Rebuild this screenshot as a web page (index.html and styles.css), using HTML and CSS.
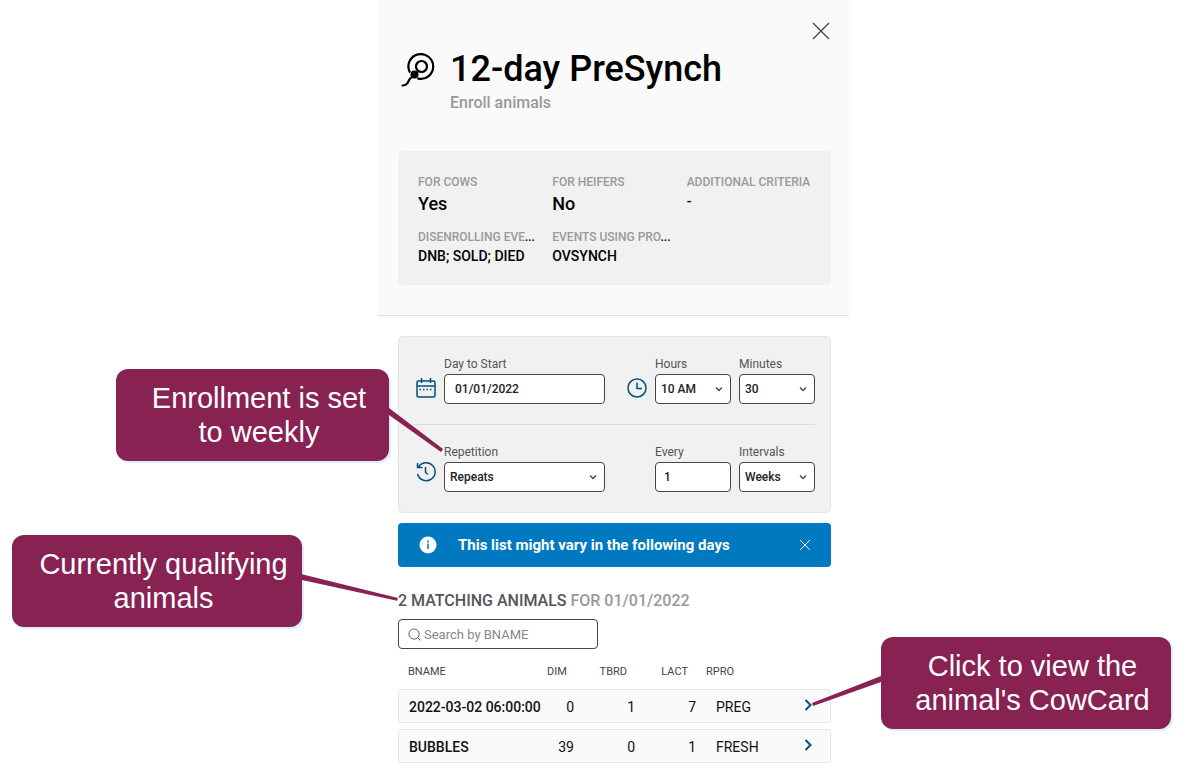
FILE: index.html
```html
<!DOCTYPE html>
<html lang="en">
<head>
  <meta charset="UTF-8">
  <meta name="viewport" content="width=device-width, initial-scale=1">
  <title>12-day PreSynch</title>
  <link rel="stylesheet" href="styles.css">
</head>
<body>

  <main class="panel">
    <header class="panel-header">
      <button type="button" class="close" aria-label="Close">
        <svg width="18" height="18" viewBox="0 0 18 18"><path d="M1 1l16 16M17 1L1 17"/></svg>
      </button>

      <div class="title-row">
        <svg class="title-icon" width="36" height="36" viewBox="0 0 36 36">
          <path d="M9.600 18.8A12.400 12.400 0 1 1 18.200 25.6"/>
          <circle cx="21.500" cy="13.500" r="5.500"/>
          <circle class="filled" cx="14.500" cy="21.500" r="4"/>
          <path d="M13 23.500c-5 2-3.500 4-5.500 6.500-1 1.500-2.500 2.500-5 2.500"/>
        </svg>
        <div>
          <h1>12-day PreSynch</h1>
          <p class="subtitle">Enroll animals</p>
        </div>
      </div>

      <dl class="summary">
        <div>
          <dt>FOR COWS</dt>
          <dd class="big">Yes</dd>
        </div>
        <div>
          <dt>FOR HEIFERS</dt>
          <dd class="big">No</dd>
        </div>
        <div>
          <dt>ADDITIONAL CRITERIA</dt>
          <dd>-</dd>
        </div>
        <div>
          <dt>DISENROLLING EVE<span class="more">...</span></dt>
          <dd>DNB; SOLD; DIED</dd>
        </div>
        <div>
          <dt>EVENTS USING PRO<span class="more">...</span></dt>
          <dd>OVSYNCH</dd>
        </div>
      </dl>
    </header>

    <div class="panel-body">
      <form class="schedule">
        <div class="schedule-row">
          <svg class="field-icon" width="20" height="20" viewBox="0 0 20 20">
            <rect x="1" y="3" width="18" height="16" rx="1.500"/>
            <path d="M1 8h18M5.500 0v5M14.500 0v5"/>
            <path d="M3.500 11.500h13" stroke-dasharray="1.500 2"/>
          </svg>
          <div class="field">
            <label for="start">Day to Start</label>
            <input type="text" id="start" class="date" value="01/01/2022">
          </div>
          <svg class="field-icon" width="20" height="20" viewBox="0 0 20 20">
            <circle cx="10" cy="10" r="9"/>
            <path d="M10 4.500v6h5"/>
          </svg>
          <div class="field">
            <label for="hours">Hours</label>
            <div class="select">
              <select id="hours"><option>10 AM</option></select>
              <svg width="8" height="6" viewBox="0 0 8 6"><path d="M1 1.500l3 3 3-3"/></svg>
            </div>
          </div>
          <div class="field">
            <label for="minutes">Minutes</label>
            <div class="select">
              <select id="minutes"><option>30</option></select>
              <svg width="8" height="6" viewBox="0 0 8 6"><path d="M1 1.500l3 3 3-3"/></svg>
            </div>
          </div>
        </div>

        <div class="schedule-row">
          <svg class="field-icon history" width="20" height="20" viewBox="0 0 20 20">
            <path d="M2.500 5A9 9 0 1 1 1.500 12M1.500 1v4.500H6.500M9.500 5v5.500l2.500 2"/>
          </svg>
          <div class="field">
            <label for="repetition">Repetition</label>
            <div class="select">
              <select id="repetition"><option>Repeats</option></select>
              <svg width="8" height="6" viewBox="0 0 8 6"><path d="M1 1.500l3 3 3-3"/></svg>
            </div>
          </div>
          <div class="field every">
            <label for="every">Every</label>
            <input type="text" id="every" value="1">
          </div>
          <div class="field">
            <label for="intervals">Intervals</label>
            <div class="select">
              <select id="intervals"><option>Weeks</option></select>
              <svg width="8" height="6" viewBox="0 0 8 6"><path d="M1 1.500l3 3 3-3"/></svg>
            </div>
          </div>
        </div>
      </form>

      <div class="notice">
        <svg width="18" height="18" viewBox="0 0 18 18">
          <circle cx="9" cy="9" r="8.500" fill="#fff"/>
          <path d="M9 4.500v2M9 7.500v5.500" stroke="#0079c1" stroke-width="1.500"/>
        </svg>
        <p>This list might vary in the following days</p>
        <button type="button" aria-label="Dismiss">
          <svg width="12" height="12" viewBox="0 0 12 12"><path d="M1 1l10 10M11 1L1 11"/></svg>
        </button>
      </div>

      <h2>2 MATCHING ANIMALS <span>FOR 01/01/2022</span></h2>

      <div class="search">
        <svg width="13" height="13" viewBox="0 0 14 14"><circle cx="6.500" cy="6.500" r="5.500"/><path d="M10.500 10.500l3 3"/></svg>
        <input type="text" aria-label="Search by BNAME" placeholder="Search by BNAME">
      </div>

      <table class="animals">
        <colgroup>
          <col class="col-name">
          <col class="col-dim">
          <col class="col-num">
          <col class="col-num">
          <col>
          <col class="col-open">
        </colgroup>
        <thead>
          <tr>
            <th>BNAME</th>
            <th class="num">DIM</th>
            <th class="num">TBRD</th>
            <th class="num">LACT</th>
            <th class="rpro">RPRO</th>
            <th></th>
          </tr>
        </thead>
        <tbody>
          <tr>
            <td class="name">2022-03-02 06:00:00</td>
            <td class="num">0</td>
            <td class="num">1</td>
            <td class="num">7</td>
            <td>PREG</td>
            <td class="open"><button type="button" aria-label="Open CowCard"><svg width="8" height="12" viewBox="0 0 8 12"><path d="M1.500 1l5 5-5 5"/></svg></button></td>
          </tr>
          <tr>
            <td class="name">BUBBLES</td>
            <td class="num">39</td>
            <td class="num">0</td>
            <td class="num">1</td>
            <td>FRESH</td>
            <td class="open"><button type="button" aria-label="Open CowCard"><svg width="8" height="12" viewBox="0 0 8 12"><path d="M1.500 1l5 5-5 5"/></svg></button></td>
          </tr>
        </tbody>
      </table>
    </div>

    <!-- Callouts over the panel -->
    <div class="callout callout-weekly">
      Enrollment is set<br>to weekly
      <svg width="54" height="46" viewBox="0 0 54 46"><path d="M0 1l54 41-2 3L0 8z"/></svg>
    </div>
    <div class="callout callout-animals">
      Currently qualifying<br>animals
      <svg width="96" height="28" viewBox="0 0 97 28"><path d="M0 0l97 24-1 3L0 6z"/></svg>
    </div>
    <div class="callout callout-card">
      Click to view the<br>animal's CowCard
      <svg width="69" height="32" viewBox="0 0 69 32"><path d="M69 1L0 28l1 3 68-24z"/></svg>
    </div>
  </main>

</body>
</html>
```
FILE: styles.css
```css
* {
  box-sizing: border-box;
}

body {
  display: grid;
  grid-template-columns: minmax(0, 378fr) minmax(0, 471px) minmax(0, 339fr);
  margin: 0;
  background: #fff;
  color: #000;
  font-family: Roboto, "Liberation Sans", sans-serif;
}

h1, h2, p, dl, dd {
  margin: 0;
}

svg {
  display: block;
  fill: none;
}

button {
  padding: 0;
  border: 0;
  background: none;
  cursor: pointer;
}

.panel {
  grid-column: 2;
  position: relative;
}

/* header */
.panel-header {
  padding: 22px 18px 30px 20px;
  border-bottom: 1px solid #e0e0e0;
  background: #fafafa;
}

.close {
  display: block;
  margin: 0 1px 0 auto;
}

.close svg {
  stroke: #444;
  stroke-width: 1.3;
}

.title-row {
  display: flex;
  gap: 14px;
  padding: 6px 2px 0;
}

.title-icon {
  margin-top: 7px;
  stroke: #000;
  stroke-width: 2.2;
  stroke-linecap: round;
}

.title-icon .filled {
  fill: #000;
  stroke: none;
}

h1 {
  font-size: 36px;
  line-height: 46px;
  font-weight: 500;
}

.subtitle {
  color: #999;
  font-size: 16px;
  line-height: 22px;
  font-weight: 500;
}

.summary {
  display: grid;
  grid-template-columns: repeat(3, 1fr);
  gap: 12px 10px;
  margin-top: 37px;
  padding: 21px 20px 19px;
  border-radius: 4px;
  background: #f1f1f1;
  white-space: nowrap;
}

.summary dt {
  color: #999;
  font-size: 12px;
  line-height: 20px;
  font-weight: 500;
}

.summary .more {
  color: #000;
}

.summary dd {
  font-size: 14px;
  line-height: 19px;
  font-weight: 500;
}

.summary .big {
  font-size: 18px;
  line-height: 23px;
}

/* schedule form */
.panel-body {
  padding: 20px 18px 20px 20px;
}

.schedule {
  padding: 0 15px;
  border: 1px solid #e5e5e5;
  border-radius: 5px;
  background: #f1f1f1;
}

.schedule-row {
  display: grid;
  grid-template-columns: 22px minmax(0, 1fr) 34px 76px 76px;
  column-gap: 8px;
  padding: 17px 0 20px;
}

.schedule-row + .schedule-row {
  border-top: 1px solid #dcdcdc;
}

.field-icon {
  align-self: end;
  justify-self: end;
  margin-bottom: 6px;
  stroke: #00517c;
  stroke-width: 1.5;
}

.history {
  margin-bottom: 10px;
}

.every {
  grid-column: 4;
}

.field label {
  display: block;
  color: #555;
  font-size: 12px;
  line-height: 20px;
}

.field input, .field select {
  display: block;
  width: 100%;
  height: 30px;
  padding: 0 8px;
  border: 1px solid #444;
  border-radius: 4px;
  background: #fff;
  color: #222;
  font-family: inherit;
  font-size: 12px;
  font-weight: 500;
}

.field .date {
  padding: 0 10px;
}

.field select {
  appearance: none;
  padding: 0 5px;
}

.select {
  position: relative;
}

.select svg {
  position: absolute;
  top: 12px;
  right: 8px;
  stroke: #444;
  stroke-width: 1.3;
  pointer-events: none;
}

/* notice */
.notice {
  display: flex;
  align-items: center;
  margin-top: 10px;
  padding: 0 20px 0 21px;
  height: 44px;
  border-radius: 4px;
  background: #0079c1;
  color: #fff;
}

.notice p {
  flex: 1;
  padding-left: 21px;
  font-size: 15px;
  font-weight: 700;
}

.notice button svg {
  stroke: #fff;
}

h2 {
  margin-top: 24px;
  color: #555;
  font-size: 16px;
  line-height: 20px;
  font-weight: 500;
}

h2 span {
  color: #999;
}

.search {
  display: flex;
  align-items: center;
  gap: 3px;
  width: 200px;
  height: 30px;
  margin-top: 8px;
  padding: 0 9px;
  border: 1px solid #444;
  border-radius: 4px;
}

.search svg {
  stroke: #555;
}

.search input {
  flex: 1;
  min-width: 0;
  padding: 0;
  border: 0;
  outline: 0;
  background: none;
  font-family: inherit;
  font-size: 13px;
}

.search input::placeholder {
  color: #888;
}

/* animals */
.animals {
  width: 100%;
  margin-top: 7px;
  border-collapse: separate;
  border-spacing: 0 6px;
  table-layout: fixed;
}

.col-name {
  width: 149px;
}

.col-dim {
  width: 37px;
}

.col-num {
  width: 61px;
}

.col-open {
  width: 34px;
}

.animals th {
  height: 21px;
  padding: 0 10px 2px;
  color: #444;
  font-size: 11px;
  font-weight: 400;
  text-align: left;
}

.animals th.num {
  padding-left: 0;
  padding-right: 18px;
  text-align: right;
}

.animals th.rpro {
  padding-left: 0;
}

.animals td {
  height: 34px;
  padding: 2px 10px 0;
  border: solid #e5e5e5;
  border-width: 1px 0;
  background: #fafafa;
  color: #111;
  font-size: 14px;
  white-space: nowrap;
}

.animals td.num {
  padding-left: 0;
  text-align: right;
}

.animals td.name {
  padding-right: 0;
  border-left-width: 1px;
  border-radius: 4px 0 0 4px;
  font-weight: 500;
}

.animals td.open {
  padding: 0 0 2px 7px;
  border-right-width: 1px;
  border-radius: 0 4px 4px 0;
}

.open button {
  display: block;
}

.open svg {
  stroke: #00517c;
  stroke-width: 2;
}

/* callouts */
.callout {
  position: absolute;
  padding: 12px 0 12px 13px;
  border-radius: 12px;
  background: #872253;
  box-shadow: 2px 2px 1px #d9eeff;
  color: #fff;
  font-family: "Liberation Sans", Arial, sans-serif;
  font-size: 29px;
  line-height: 34px;
  text-align: center;
  white-space: nowrap;
}

.callout svg {
  position: absolute;
  fill: #872253;
}

.callout-weekly {
  top: 369px;
  left: -262px;
  width: 273px;
}

.callout-weekly svg {
  top: 38px;
  left: 100%;
}

.callout-animals {
  top: 535px;
  left: -366px;
  width: 290px;
}

.callout-animals svg {
  top: 39px;
  left: 100%;
}

.callout-card {
  top: 637px;
  left: 503px;
  width: 290px;
}

.callout-card svg {
  top: 38px;
  right: 100%;
}
```
